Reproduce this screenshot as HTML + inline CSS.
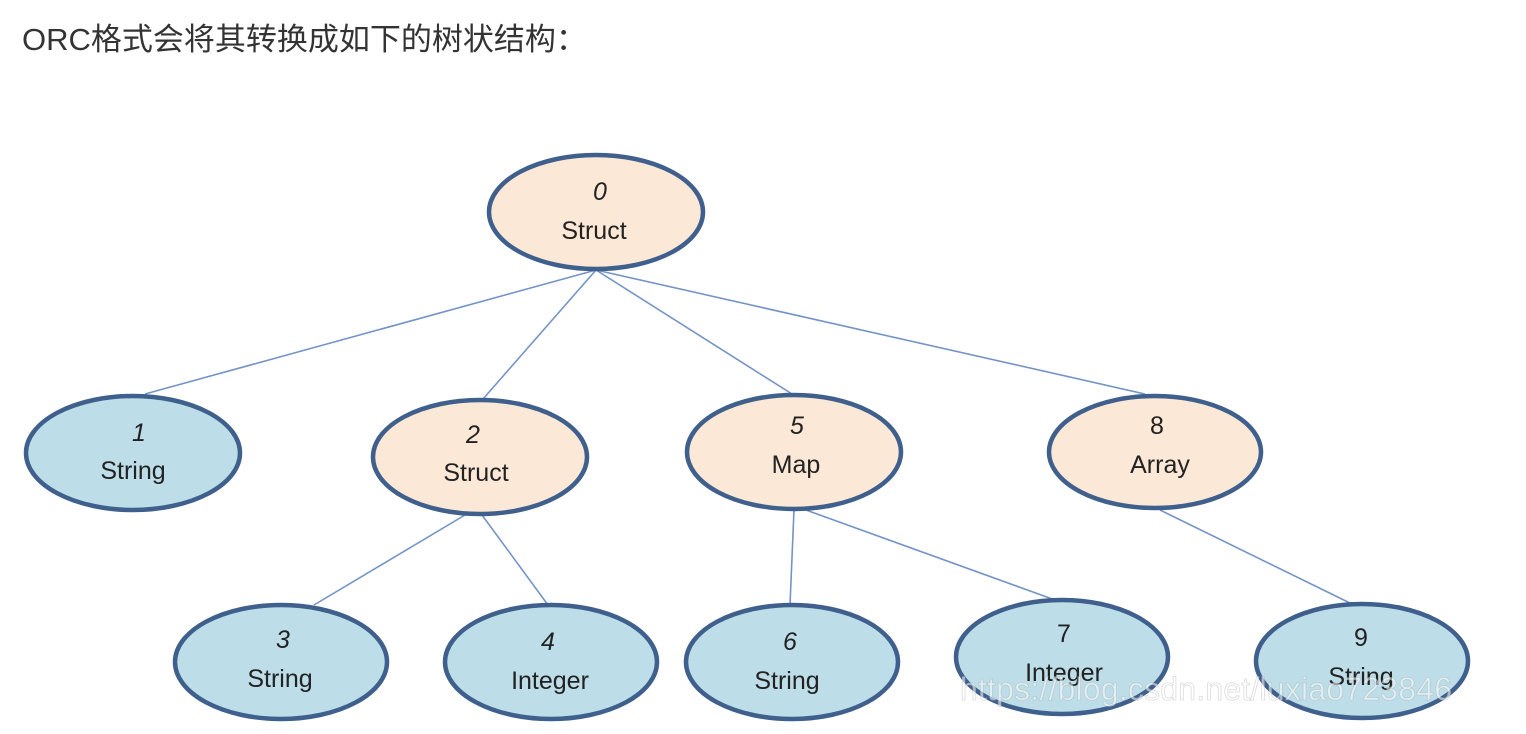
<!DOCTYPE html>
<html><head><meta charset="utf-8"><style>
html,body{margin:0;padding:0;background:#fff;width:1526px;height:734px;overflow:hidden}
.t{position:absolute;left:22px;top:20px;font:31px "Liberation Sans","Noto Sans CJK SC",sans-serif;color:#333;line-height:40px}
svg{position:absolute;left:0;top:0}
</style></head><body>
<div class="t">ORC格式会将其转换成如下的树状结构：</div>
<svg width="1526" height="734" font-family="'Liberation Sans',sans-serif" font-size="25" fill="#222">
<g stroke="#7493c6" stroke-width="1.6">
<line x1="596" y1="270" x2="145" y2="394"/><line x1="596" y1="270" x2="483" y2="399"/>
<line x1="596" y1="270" x2="792" y2="394"/><line x1="596" y1="270" x2="1145" y2="394"/>
<line x1="465" y1="515" x2="314" y2="605"/><line x1="482" y1="515" x2="548" y2="605"/>
<line x1="794" y1="510" x2="790" y2="605"/><line x1="806" y1="510" x2="1055" y2="600"/>
<line x1="1160" y1="510" x2="1352" y2="604"/>
</g>
<g stroke="#3f5f8c" stroke-width="4.5">
<ellipse cx="596" cy="212" rx="107" ry="57" fill="#fbe8d6"/>
<ellipse cx="133" cy="453" rx="107" ry="57" fill="#bddde8"/>
<ellipse cx="480" cy="457" rx="107" ry="57" fill="#fbe8d6"/>
<ellipse cx="794" cy="452" rx="107" ry="57" fill="#fbe8d6"/>
<ellipse cx="1155" cy="452" rx="106" ry="56" fill="#fbe8d6"/>
<ellipse cx="281" cy="662" rx="106" ry="57" fill="#bddde8"/>
<ellipse cx="551" cy="662" rx="106" ry="57" fill="#bddde8"/>
<ellipse cx="792" cy="662" rx="106" ry="57" fill="#bddde8"/>
<ellipse cx="1062" cy="657" rx="106" ry="57" fill="#bddde8"/>
<ellipse cx="1362" cy="661" rx="106" ry="57" fill="#bddde8"/>
</g>
<g text-anchor="middle">
<text x="600" y="200" font-style="italic">0</text><text x="594" y="239">Struct</text>
<text x="139" y="441" font-style="italic">1</text><text x="133" y="479">String</text>
<text x="473" y="443" font-style="italic">2</text><text x="476" y="481">Struct</text>
<text x="797" y="434" font-style="italic">5</text><text x="796" y="473">Map</text>
<text x="1157" y="434">8</text><text x="1160" y="473">Array</text>
<text x="283" y="648" font-style="italic">3</text><text x="280" y="687">String</text>
<text x="548" y="650" font-style="italic">4</text><text x="550" y="689">Integer</text>
<text x="790" y="650" font-style="italic">6</text><text x="787" y="689">String</text>
<text x="1064" y="642">7</text><text x="1064" y="681">Integer</text>
<text x="1361" y="646">9</text><text x="1361" y="685">String</text>
</g>
<text x="960" y="700" font-size="32" textLength="492" fill="#fff" fill-opacity="0.55" stroke="#999" stroke-opacity="0.35" stroke-width="0.8">https://blog.csdn.net/luxiao723846</text>
</svg>
</body></html>
